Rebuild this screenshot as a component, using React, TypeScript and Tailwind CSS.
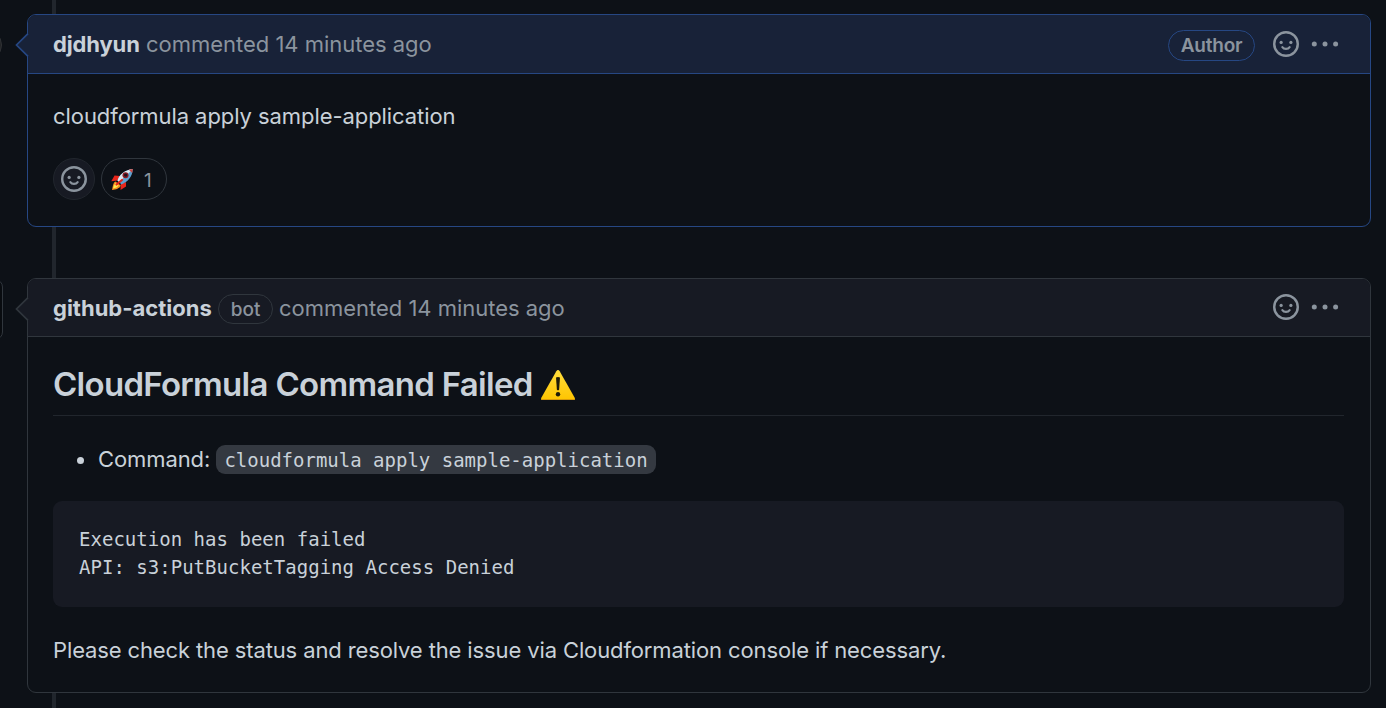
import type { ReactNode } from "react";

function Smiley() {
  return (
    <svg width="26" height="26" viewBox="0 0 16 16" fill="currentColor" className="block shrink-0">
      <path d="M8 0a8 8 0 1 1 0 16A8 8 0 0 1 8 0ZM1.5 8a6.5 6.5 0 1 0 13 0 6.5 6.5 0 0 0-13 0Z" />
      <circle cx="5" cy="7" r="1" />
      <circle cx="11" cy="7" r="1" />
      <path d="M5.75 9.9C6.25 10.65 7 11 8 11s1.75-.35 2.25-1.1" fill="none" stroke="currentColor" strokeWidth="1.3" strokeLinecap="round" />
    </svg>
  );
}

function Kebab() {
  return (
    <svg width="28" height="6" viewBox="0 0 28 6" fill="currentColor" className="block shrink-0">
      <circle cx="3.3" cy="3" r="2.5" />
      <circle cx="14" cy="3" r="2.5" />
      <circle cx="24.6" cy="3" r="2.5" />
    </svg>
  );
}

function Rocket() {
  return (
    <svg width="23" height="23" viewBox="0 0 23 23" className="block shrink-0">
      <path d="M9 8 3.500 7.500 0.300 13.200l6.200-.7Z" fill="#e8261b" />
      <path d="M15 14 15 18.500 9.500 22l.3-6Z" fill="#e8261b" />
      <path d="M4.500 13.500C2.200 14.500 2 17.500 1 22 5 21.500 8.700 20.500 9.700 17.500Z" fill="#f7901e" />
      <path d="M5 15c-1.500 1-2.300 3-3 5.500 2.500-.5 4.700-1.300 5.600-3.200Z" fill="#ffee50" />
      <path d="M6.500 12.500C8.500 6.500 13.500 2 21.800 1 21.500 8.500 16.800 13.800 10.500 16.500Z" fill="#5f9fce" />
      <path d="M6.500 12.500C8.500 6.500 13.500 2 21.800 1 18 5 12.500 9.800 8.200 14.200Z" fill="#dce8ef" />
      <path d="M17.800 1.800 21.800 1l-.6 4Z" fill="#c9453f" />
      <circle cx="14.500" cy="7.200" r="3" fill="#8c1b24" />
      <circle cx="14.700" cy="7.100" r="1.700" fill="#1d1420" />
      <path d="m5.500 16.500 5.500-4.500" stroke="#e8261b" strokeWidth="2.200" strokeLinecap="round" />
    </svg>
  );
}

function Warning() {
  return (
    <svg width="36" height="32" viewBox="0 0 36 32" className="block shrink-0">
      <defs>
        <linearGradient id="warn" x1="0" y1="0" x2="0" y2="1">
          <stop offset="0" stopColor="#ffdd3c" />
          <stop offset="1" stopColor="#ffc400" />
        </linearGradient>
      </defs>
      <path d="M16.300 2.200Q18 0 19.700 2.200L34.700 28.700Q35.600 31 33.400 31H2.600Q.4 31 1.300 28.700Z" fill="url(#warn)" />
      <path d="M1.200 29.900Q1.500 31 2.600 31H33.400Q34.500 31 34.800 29.900Z" fill="#d99a08" />
      <path d="M16 8.600Q18 7.200 20 8.600L19.100 20.700Q18 22 16.900 20.700Z" fill="#1d1a08" />
      <circle cx="18" cy="25.300" r="2.200" fill="#1d1a08" />
    </svg>
  );
}

function Pointer({ fill, stroke }: { fill: string; stroke: string }) {
  return (
    <svg width="14" height="24" viewBox="0 0 14 24" className="absolute top-[18px] -left-[13px]">
      <path d="M14 0.500 1.500 12l12.500 11.500Z" fill={fill} />
      <path d="M13 0.700 1.500 12l11.500 11.300" fill="none" stroke={stroke} strokeWidth="1.700" />
    </svg>
  );
}

function Badge({ className, children }: { className: string; children: ReactNode }) {
  return (
    <span className={"flex items-center justify-center rounded-full border text-[19px] text-[#8b949e] " + className}>
      {children}
    </span>
  );
}

export default function App() {
  return (
    <main className="relative h-[708px] w-full overflow-hidden bg-[#0d1117] pt-[14px] pl-[27px] font-['Inter','Liberation_Sans',sans-serif] text-[22px] text-[#c9d1d9]">
      <div className="absolute top-0 left-[52px] h-full w-1 bg-[#21262d]" />
      <div className="absolute top-[29px] -left-[30px] h-[32px] w-[32px] rounded-full border border-[#303236] bg-[#222426]" />
      <div className="absolute top-[279px] -left-[57px] h-[61px] w-[60px] rounded-[8px] border border-[#30363d] bg-[#090c10]" />

      <article className="relative h-[213px] w-[1344px] rounded-[9px] border border-[#264783] bg-[#0d1117]">
        <header className="flex h-[59px] items-center rounded-t-[8px] border-b border-[#264783] bg-[#182238] pl-[25px] text-[#8b949e]">
          <Pointer fill="#182238" stroke="#264783" />
          <p className="whitespace-pre">
            <strong className="inline-block w-[93px] font-bold tracking-[-0.13px] text-[#c9d1d9]">djdhyun</strong>
            <span className="tracking-[-0.02px]">commented 14 minutes ago</span>
          </p>
          <Badge className="mt-[3px] mr-[18px] ml-auto h-[31px] w-[87px] border-[#264783] pt-[2px] font-semibold tracking-[-0.2px]">Author</Badge>
          <Smiley />
          <span className="mr-[31px] mb-[1px] ml-[12px]"><Kebab /></span>
        </header>
        <p className="mt-[28px] ml-[25px] h-[28px] leading-[28px] tracking-[-0.07px]">cloudformula apply sample-application</p>
        <div className="mt-[28px] ml-[25px] flex gap-[6px]">
          <span className="flex h-[42px] w-[42px] items-center justify-center rounded-full border border-[#21262d] bg-[#171a23] text-[#8b949e]">
            <Smiley />
          </span>
          <span className="flex h-[42px] w-[66px] items-center gap-[10px] rounded-full border border-[#30363d] pl-[9px] text-[19px] text-[#8b949e]">
            <Rocket />
            <span className="pt-[4px]">1</span>
          </span>
        </div>
      </article>

      <article className="relative mt-[51px] h-[415px] w-[1344px] rounded-[9px] border border-[#30363d] bg-[#0d1117]">
        <header className="flex h-[58px] items-center rounded-t-[8px] border-b border-[#30363d] bg-[#171a23] pl-[25px] text-[#8b949e]">
          <Pointer fill="#171a23" stroke="#30363d" />
          <strong className="w-[165px] pt-[2px] font-bold whitespace-nowrap text-[#c9d1d9]">github-actions</strong>
          <Badge className="mt-[2px] h-[30px] w-[55px] border-[#30363d] pt-[3px] font-medium">bot</Badge>
          <span className="mr-auto ml-[6px] pt-[2px] tracking-[-0.02px]">commented 14 minutes ago</span>
          <span className="mb-[1px]"><Smiley /></span>
          <span className="mr-[31px] mb-[1px] ml-[12px]"><Kebab /></span>
        </header>
        <div className="pr-[26px] pl-[25px]">
          <h2 className="flex h-[79px] items-center border-b border-[#21262d] pt-[17px] text-[33px] font-semibold text-[#c9d1d9]">
            <span className="w-[487px] tracking-[-0.7px] whitespace-nowrap">CloudFormula Command Failed</span>
            <Warning />
          </h2>
          <ul className="mt-[29px]">
            <li className="flex h-[29px] items-center">
              <span className="mt-[2px] ml-[24px] h-[7px] w-[7px] rounded-full bg-[#c9d1d9]" />
              <span className="ml-[14px] w-[118px] tracking-[-0.1px]">Command:</span>
              <code className="flex h-[29px] w-[440px] items-center justify-center rounded-[9px] bg-[#343941] pt-[2px] font-['DejaVu_Sans_Mono',monospace] text-[19px] whitespace-nowrap">
                cloudformula apply sample-application
              </code>
            </li>
          </ul>
          <pre className="mt-[27px] h-[106px] rounded-[9px] bg-[#171a23] px-[26px] pt-[24px] font-['DejaVu_Sans_Mono',monospace] text-[19px] leading-[28px] tracking-[0.02px]">{"Execution has been failed\nAPI: s3:PutBucketTagging Access Denied"}</pre>
          <p className="mt-[29px] leading-[28px] tracking-[-0.123px]">Please check the status and resolve the issue via Cloudformation console if necessary.</p>
        </div>
      </article>
    </main>
  );
}
